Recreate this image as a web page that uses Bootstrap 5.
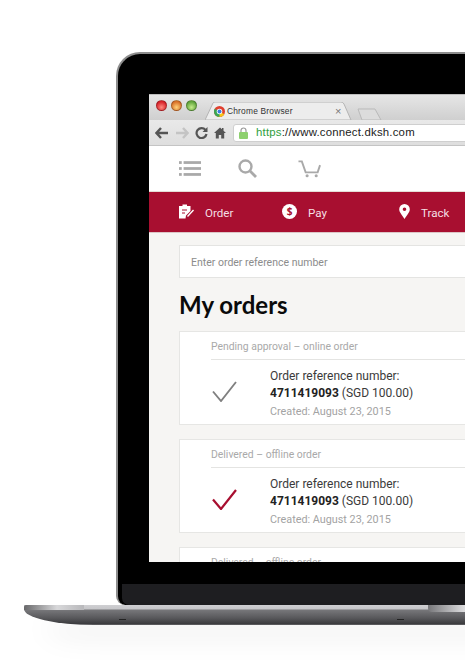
<!DOCTYPE html>
<html lang="en">
<head>
<meta charset="UTF-8" />
<title>My orders</title>
<link rel="stylesheet" href="https://cdn.jsdelivr.net/npm/bootstrap@5.3.0/dist/css/bootstrap.min.css" />
<style>
  html, body { background: #fff; overflow: hidden; height: 662px; }
  body { font-family: "Roboto", "Open Sans", sans-serif; width: 465px; }
  .stage { padding-top: 52px; width: 465px; overflow: hidden; height: 662px; }

  /* laptop */
  .lid { margin-left: 116px; width: 420px; height: 553px; background: #000; border: solid #8d8d8d; border-width: 2px 0 0 2px;
         border-radius: 24px 0 0 9px; padding: 40px 0 0 31px; position: relative; }
  .lid-chin { height: 21px; background: #1e1e21; margin: 22px 0 0 -27px; border-radius: 0 0 0 7px; }
  .screen { width: 389px; height: 468px; overflow: hidden; background: #f6f5f3; }
  .base { margin-left: 24px; width: 480px; height: 20px; position: relative;
          border-radius: 0 0 0 70px / 0 0 0 16px;
          background: linear-gradient(#cfcfd2 0, #c6c6c9 4px, #77777a 5px, #58585b 13px, #3a3a3d 19px, #77777a 20px);
          box-shadow: 12px 16px 28px -6px rgba(0,0,0,.13); }
  .base-edge { height: 5px; width: 60px; background: linear-gradient(90deg, #68686a, #d8d8da 55%, #b8b8bb); border-radius: 2px 0 0 0; }
  .base-notch { position: absolute; left: 404px; top: 0; width: 60px; height: 7px; border-radius: 0 0 0 4px;
                background: linear-gradient(90deg, #77777a, #dcdcde 60%, #a9a9ab); }
  .vent { position: absolute; top: 14px; width: 7px; height: 1px; background: #222; }

  /* browser chrome */
  .tabstrip { height: 26px; background: linear-gradient(#e6e6e6, #cfcfcf); border-top: 1px solid #bdbdbd; padding-left: 7px; }
  .light-row { gap: 4px; }
  .light { width: 11px; height: 11px; border-radius: 50%; border: 1px solid rgba(0,0,0,.25); }
  .light-red { background: radial-gradient(circle at 50% 70%, #ff8a80, #d8232a 70%); }
  .light-amber { background: radial-gradient(circle at 50% 70%, #ffd27a, #d9722a 70%); }
  .light-green { background: radial-gradient(circle at 50% 70%, #c6ec8a, #62a63c 70%); }
  .tab-shape { position: relative; width: 148px; height: 18px; margin-left: 8px; padding-left: 9px; font-family: "Liberation Sans", sans-serif; font-size: 8.4px; color: #333; letter-spacing: .2px; }
  .tab-bg { position: absolute; left: 0; top: 0; }
  .tab-x { position: absolute; left: 130px; top: 3px; font-size: 11px; color: #777; line-height: 12px; }
  .tab-label { position: relative; }
  .favicon { margin-right: 2px; }
  .toolbar { height: 26px; background: linear-gradient(#e9e9e9, #dedede); border-bottom: 1px solid #c4c4c4; padding-left: 6px; }
  .tool-icon { margin-right: 6px; flex-shrink: 0; }
  .omnibox { width: 260px; height: 18px; margin-left: 7px; background: #fff; border: 1px solid #cfcfcf; border-radius: 3px 0 0 3px; padding-left: 5px; font-family: "Liberation Sans", sans-serif; font-size: 11.4px; color: #222; letter-spacing: .2px; }
  .url-secure { color: #2f9e3d; }

  /* site */
  .topnav { height: 46px; background: #fff; border-bottom: 1px solid #e4ded6; padding-left: 30px; }
  .rednav { height: 41px; background: #a80f30; color: #f4dfe3; font-size: 11.6px; border-bottom: 1px solid #dcc6c6; padding-left: 30px; }
  .rednav-item svg { margin-right: 11px; }
  .rednav-item span { margin-top: 4px; }
  .rednav-order { width: 103px; }
  .rednav-pay { width: 117px; }
  .pagebody { padding: 12px 0 0 30px; }
  .order-search { width: 400px; height: 33px; background: #fff; border: 1px solid #e4e4e2; padding: 3px 0 0 11px; font-size: 10.5px; color: #8c8c8c; }
  .page-heading { font-family: "Lato", sans-serif; font-size: 24px; font-weight: 700; color: #0a0a0a; line-height: 32px; margin: 11px 0 10px; }
  .order-box { width: 400px; height: 94px; background: #fff; border: 1px solid #e6e6e4; margin-bottom: 14px; padding-left: 31px; }
  .order-status { height: 28px; padding-top: 2px; border-bottom: 1px solid #e4e4e2; font-size: 10.4px; color: #a9a9a9; }
  .order-main { padding-top: 8px; }
  .check-col { width: 59px; padding: 11px 0 0 1px; }
  .order-line { font-size: 12px; line-height: 17px; color: #3a3a3a; }
  .order-id { color: #222; font-weight: 700; }
  .order-date { font-size: 10.8px; line-height: 19px; color: #a3a3a3; }
</style>
</head>
<body>
<div class="stage">
  <div class="lid">
    <div class="screen">
      <div class="tabstrip d-flex align-items-end">
        <div class="light-row d-flex align-self-center mb-1">
          <span class="light light-red"></span>
          <span class="light light-amber"></span>
          <span class="light light-green"></span>
        </div>
        <div class="tab-shape d-flex align-items-center">
          <svg class="tab-bg" width="148" height="18" viewBox="0 0 148 18">
            <path d="M0 18 L8 1 Q8.500 0 10 0 H136 Q138 0 139 2 L146 18 Z" fill="#ededed" stroke="#b4b4b4" />
          </svg>
          <svg class="tab-label favicon" width="11" height="11" viewBox="0 0 22 22">
            <circle cx="11" cy="11" r="11" fill="#e0402f" />
            <path d="M11 11 L20.500 16.500 A11 11 0 0 1 5 20.200 Z" fill="#f5c518" />
            <path d="M11 11 L11 22 A11 11 0 0 1 1.500 5.500 Z" fill="#3aa655" />
            <circle cx="11" cy="11" r="5.500" fill="#fff" />
            <circle cx="11" cy="11" r="4" fill="#3b7de0" />
          </svg>
          <span class="tab-label">Chrome Browser</span>
          <span class="tab-x">×</span>
        </div>
        <svg class="ms-1" width="26" height="12" viewBox="0 0 26 12">
          <path d="M1 1 H18 L24 12 H5 Z" fill="#dcdcdc" stroke="#b9b9b9" />
        </svg>
      </div>
      <div class="toolbar d-flex align-items-center">
        <svg width="14" height="12" viewBox="0 0 14 12" class="tool-icon"><path d="M6 1 L1.500 6 L6 11 M2 6 H13" fill="none" stroke="#555" stroke-width="2.400" /></svg>
        <svg width="14" height="12" viewBox="0 0 14 12" class="tool-icon"><path d="M8 1 L12.500 6 L8 11 M12 6 H1" fill="none" stroke="#c4c4c4" stroke-width="2.400" /></svg>
        <svg width="13" height="13" viewBox="0 0 13 13" class="tool-icon"><path d="M10.500 4 A5 5 0 1 0 11.500 8" fill="none" stroke="#555" stroke-width="2.200" /><path d="M12.500 1 V6 H7.500 Z" fill="#555" /></svg>
        <svg width="12" height="12" viewBox="0 0 12 12" class="flex-shrink-0"><path d="M6 0.500 L0 6 H1.800 V11.500 H4.800 V8 H7.200 V11.500 H10.200 V6 H12 L9.500 3.700 V1 H8 V2.300 Z" fill="#555" /></svg>
        <div class="omnibox d-flex align-items-center">
          <svg width="9" height="12" viewBox="0 0 9 12" class="me-1 flex-shrink-0"><path d="M2 5 V3.500 A2.500 2.500 0 0 1 7 3.500 V5" fill="none" stroke="#9a9a9a" stroke-width="1.200" /><rect y="5" width="9" height="7" rx="1" fill="#8ed06f" /></svg>
          <span class="ms-1"><span class="url-secure">https</span>://www.connect.dksh.com</span>
        </div>
      </div>
      <div class="topnav d-flex align-items-center">
        <svg width="22" height="17" viewBox="0 0 24 17"><g fill="#a9a9a9"><rect y="0.500" width="3" height="3" /><rect x="5" y="0.500" width="19" height="3" /><rect y="7" width="3" height="3" /><rect x="5" y="7" width="19" height="3" /><rect y="13.500" width="3" height="3" /><rect x="5" y="13.500" width="19" height="3" /></g></svg>
        <svg width="19" height="19" viewBox="0 0 19 19" style="margin-left:37px"><circle cx="7.500" cy="7.500" r="6" fill="none" stroke="#a9a9a9" stroke-width="2.400" /><path d="M11.800 11.800 L18 18" stroke="#a9a9a9" stroke-width="2.800" /></svg>
        <svg width="23" height="18" viewBox="0 0 24 18" style="margin-left:41px"><path d="M0.500 1 H4 L8 12.500 H20.500 L23 5" fill="none" stroke="#a9a9a9" stroke-width="2" /><circle cx="9.500" cy="16" r="1.600" fill="#a9a9a9" /><circle cx="19" cy="16" r="1.600" fill="#a9a9a9" /></svg>
      </div>
      <div class="rednav d-flex align-items-center">
        <div class="rednav-item rednav-order d-flex align-items-center">
          <svg width="15" height="15" viewBox="0 0 15 15"><path d="M0 2 H3.500 V0.500 H8 V2 H11.500 V7 L7 11.500 L6.500 14.500 H0 Z" fill="#fff" /><path d="M8 12 L14 5.500 L15 6.500 L9 13 Z" fill="#fff" /><path d="M3 6 H8 M3 9 H6" stroke="#a80f30" stroke-width="1" /></svg>
          <span>Order</span>
        </div>
        <div class="rednav-item rednav-pay d-flex align-items-center">
          <svg width="15" height="15" viewBox="0 0 15 15"><circle cx="7.500" cy="7.500" r="7.500" fill="#fff" /><text x="7.500" y="11" text-anchor="middle" font-size="10" font-weight="700" font-family="Open Sans" fill="#a80f30">$</text></svg>
          <span>Pay</span>
        </div>
        <div class="rednav-item d-flex align-items-center">
          <svg width="11" height="15" viewBox="0 0 11 15"><path fill-rule="evenodd" d="M5.500 0 A5.300 5.300 0 0 1 10.800 5.300 C10.800 8.500 7.500 11.500 5.500 15 C3.500 11.500 0.200 8.500 0.200 5.300 A5.300 5.300 0 0 1 5.500 0 Z M5.500 3.500 A1.800 1.800 0 1 0 5.500 7.100 A1.800 1.800 0 1 0 5.500 3.500 Z" fill="#fff" /></svg>
          <span>Track</span>
        </div>
      </div>
      <div class="pagebody">
        <div class="order-search d-flex align-items-center">Enter order reference number</div>
        <h1 class="page-heading">My orders</h1>

        <div class="order-box">
          <div class="order-status d-flex align-items-center">Pending approval – online order</div>
          <div class="order-main d-flex">
            <div class="check-col">
              <svg width="25" height="21" viewBox="0 0 25 21"><path d="M1 10.500 L9 20 L24 1" fill="none" stroke="#808080" stroke-width="1.900" /></svg>
            </div>
            <div>
              <div class="order-line">Order reference number:</div>
              <div class="order-line"><span class="order-id">4711419093</span> (SGD 100.00)</div>
              <div class="order-date">Created: August 23, 2015</div>
            </div>
          </div>
        </div>

        <div class="order-box">
          <div class="order-status d-flex align-items-center">Delivered – offline order</div>
          <div class="order-main d-flex">
            <div class="check-col">
              <svg width="25" height="21" viewBox="0 0 25 21"><path d="M1 10.500 L9 20 L24 1" fill="none" stroke="#a80f30" stroke-width="2.200" /></svg>
            </div>
            <div>
              <div class="order-line">Order reference number:</div>
              <div class="order-line"><span class="order-id">4711419093</span> (SGD 100.00)</div>
              <div class="order-date">Created: August 23, 2015</div>
            </div>
          </div>
        </div>

        <div class="order-box">
          <div class="order-status d-flex align-items-center">Delivered – offline order</div>
        </div>
      </div>
    </div>
    <div class="lid-chin"></div>
  </div>
  <div class="base">
    <div class="base-edge"></div>
    <div class="base-notch"></div>
    <span class="vent" style="left:95px"></span>
    <span class="vent" style="left:373px"></span>
  </div>
</div>
<script src="https://cdn.jsdelivr.net/npm/bootstrap@5.3.0/dist/js/bootstrap.bundle.min.js"></script>
</body>
</html>
